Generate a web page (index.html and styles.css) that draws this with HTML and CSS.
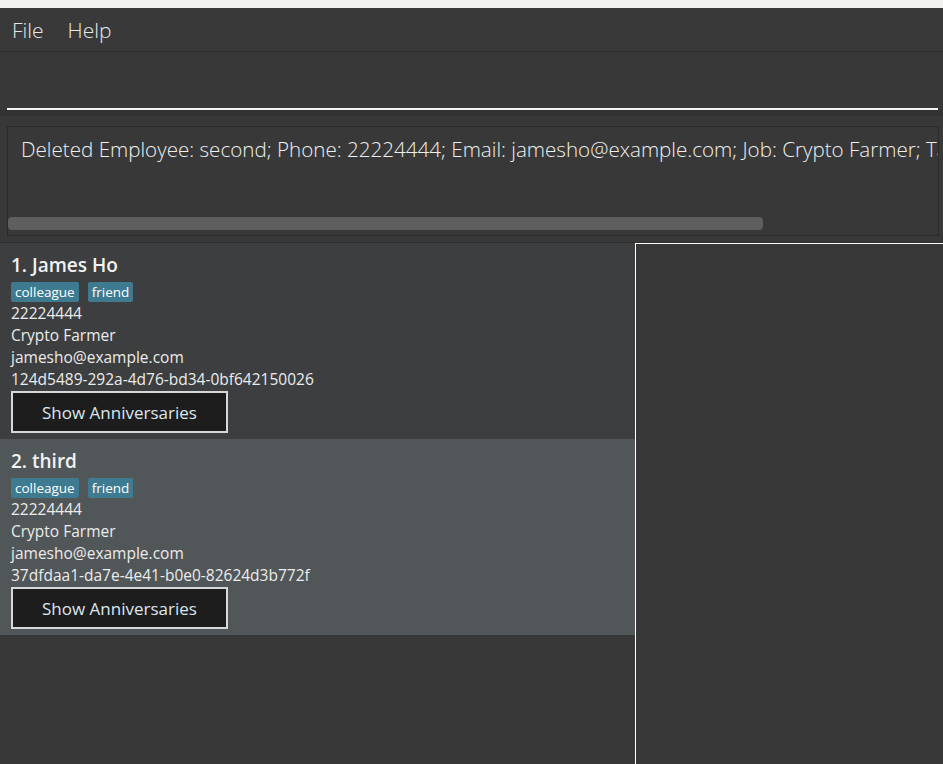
FILE: index.html
```html
<!DOCTYPE html>
<html>
<head>
<meta charset="utf-8">
<link rel="stylesheet" href="styles.css">
</head>
<body>
<div class="app">
  <div class="topstrip"></div>
  <div class="menubar">
    <span class="menu-item">File</span>
    <span class="menu-item">Help</span>
  </div>
  <div class="command">
    <div class="command-input"></div>
  </div>
  <div class="result">
    <div class="result-box">
      <div class="result-text">Deleted Employee: second; Phone: 22224444; Email: jamesho@example.com; Job: Crypto Farmer; Tags: [colleague][friend]</div>
      <div class="hscroll"><div class="hthumb"></div></div>
    </div>
  </div>
  <div class="main">
    <div class="list">
      <div class="card">
        <div class="name">1. James Ho</div>
        <div class="tags"><span class="tag">colleague</span><span class="tag">friend</span></div>
        <div class="field">22224444</div>
        <div class="field">Crypto Farmer</div>
        <div class="field">jamesho@example.com</div>
        <div class="field">124d5489-292a-4d76-bd34-0bf642150026</div>
        <div class="btn">Show Anniversaries</div>
      </div>
      <div class="card card-alt">
        <div class="name">2. third</div>
        <div class="tags"><span class="tag">colleague</span><span class="tag">friend</span></div>
        <div class="field">22224444</div>
        <div class="field">Crypto Farmer</div>
        <div class="field">jamesho@example.com</div>
        <div class="field">37dfdaa1-da7e-4e41-b0e0-82624d3b772f</div>
        <div class="btn">Show Anniversaries</div>
      </div>
    </div>
    <div class="detail"></div>
  </div>
</div>
</body>
</html>
```
FILE: styles.css
```css
html, body {
  margin: 0;
  padding: 0;
  height: 100%;
  background: #383838;
  overflow: hidden;
}
.app {
  display: flex;
  flex-direction: column;
  height: 764px;
  width: 943px;
  font-family: "Open Sans", "Noto Sans", sans-serif;
  color: #e6e6e6;
}
.topstrip {
  height: 8px;
  background: #f1f1f0;
}
.menubar {
  height: 44px;
  background: #393939;
  border-bottom: 1px solid #2c2c2c;
  display: flex;
  align-items: center;
  gap: 24px;
  padding-left: 12px;
  box-sizing: border-box;
}
.menu-item {
  font-size: 21px;
  font-weight: 300;
  color: #e8e8e8;
}
.command {
  height: 58px;
  padding: 0 5px 0 7px;
  display: flex;
  align-items: flex-end;
  border-bottom: 6px solid #323232;
  background: #383838;
}
.command-input {
  flex: 1;
  height: 1px;
  border-bottom: 2px solid #f4f4f4;
}
.result {
  padding: 10px 4px 6px 7px;
  background: #383838;
  border-bottom: 1px solid #2e2e2e;
}
.result-box {
  height: 108px;
  border: 1px solid #2a2a2a;
  display: flex;
  flex-direction: column;
  justify-content: space-between;
  overflow: hidden;
}
.result-text {
  padding: 8px 0 0 13px;
  font-size: 20.6px;
  font-weight: 300;
  white-space: nowrap;
  color: #f0f0f0;
}
.hscroll {
  height: 14px;
  padding: 0 0 4px 0;
}
.hthumb {
  width: 755px;
  height: 13px;
  background: #5e5e5e;
  border-radius: 4px;
}
.main {
  flex: 1;
  display: flex;
  min-height: 0;
}
.list {
  width: 635px;
  display: flex;
  flex-direction: column;
}
.card {
  height: 196px;
  box-sizing: border-box;
  padding: 11px 0 0 11px;
  background: #3c3e3f;
}
.card-alt {
  background: #515658;
}
.name {
  font-size: 19px;
  font-weight: 600;
  line-height: 22px;
  color: #f2f2f2;
}
.tags {
  display: flex;
  gap: 9px;
  margin-top: 6px;
  height: 20px;
}
.tag {
  background: #3e7b91;
  color: #ffffff;
  font-size: 13.5px;
  line-height: 20px;
  padding: 0 4px;
  border-radius: 2px;
}
.field {
  font-size: 15.5px;
  line-height: 22px;
  color: #ececec;
}
.btn {
  margin-top: 1px;
  width: 217px;
  height: 42px;
  box-sizing: border-box;
  border: 2px solid #d8d8d8;
  background: #1d1d1d;
  display: flex;
  align-items: center;
  justify-content: center;
  font-size: 17px;
  color: #dce7ee;
}
.detail {
  flex: 1;
  border-left: 1px solid #ffffff;
  border-top: 1px solid #ffffff;
  background: #383838;
}
```
